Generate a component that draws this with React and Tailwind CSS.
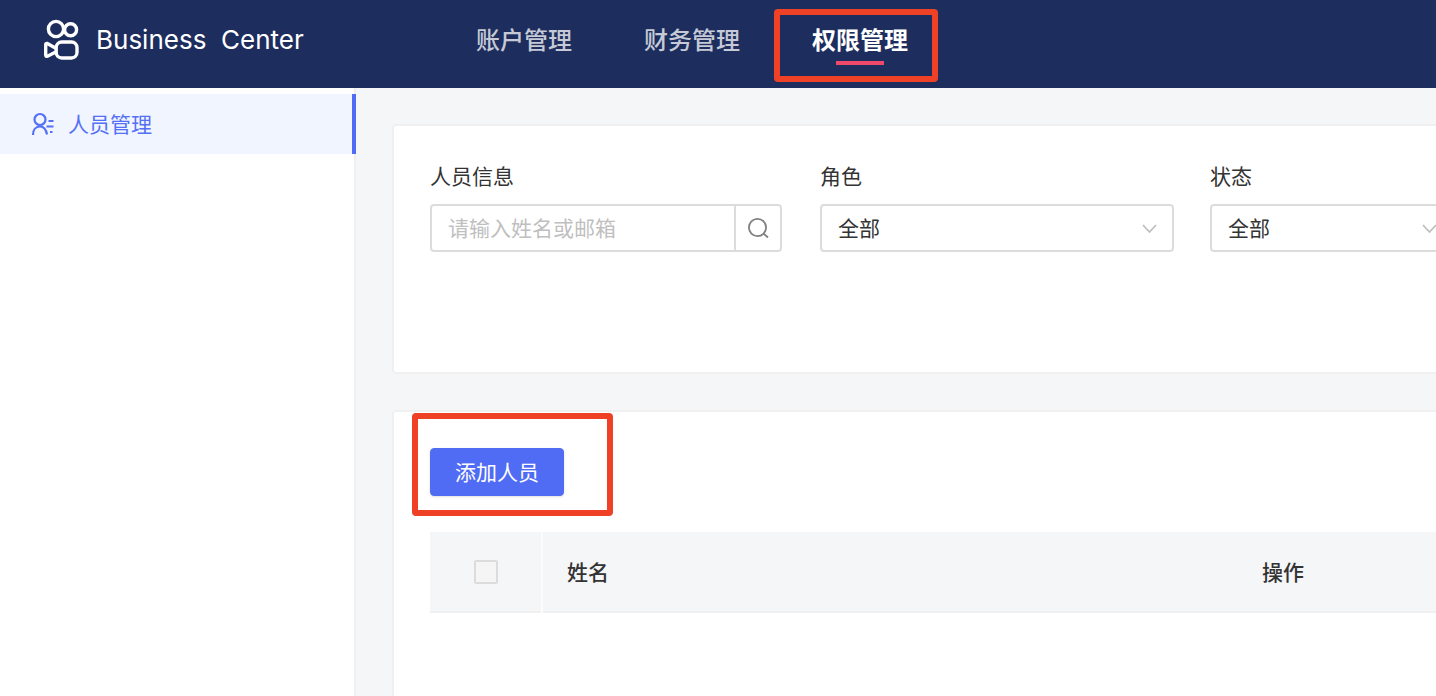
import React from "react";

const NAV = [
  { label: "账户管理", active: false },
  { label: "财务管理", active: false },
  { label: "权限管理", active: true },
];

function Logo() {
  return (
    <svg className="h-11 w-10" viewBox="0 0 40 44" fill="none" stroke="#fff" strokeWidth="3.4" strokeLinejoin="round" aria-hidden="true">
      <circle cx="14" cy="12" r="7.6" />
      <circle cx="28.6" cy="12.8" r="6" />
      <rect x="14.2" y="25" width="20.8" height="16" rx="5.5" />
      <path d="M14.2 31.5 L5.4 26.5 Q3.7 26 3.7 28 V37.8 Q3.7 39.8 5.4 39.2 L14.2 34.8" />
    </svg>
  );
}

function PeopleIcon() {
  return (
    <svg className="h-6 w-6" viewBox="0 0 24 24" fill="none" stroke="currentColor" strokeWidth="2.2" aria-hidden="true">
      <circle cx="10" cy="7.5" r="5.5" />
      <path d="M3 23 C3 18 5.5 14.5 10 14.5 C13.5 14.5 16 17 17 22.5" />
      <path d="M18.5 9 H23.5 M16.5 14.5 H23.5 M20 20 H22.5" />
    </svg>
  );
}

function SearchIcon() {
  return (
    <svg className="h-6 w-6" viewBox="0 0 24 24" fill="none" stroke="currentColor" strokeWidth="1.8" aria-hidden="true">
      <circle cx="11.5" cy="11.5" r="8.6" />
      <path d="M17.6 17.6 L22 21.5" />
    </svg>
  );
}

function Chevron() {
  return (
    <svg
      className="pointer-events-none absolute top-4 right-4 h-4 w-4 text-[#bfbfbf]"
      viewBox="0 0 16 16"
      fill="none"
      stroke="currentColor"
      strokeWidth="1.8"
      aria-hidden="true"
    >
      <path d="M1 5 L7.5 12 L14 5" />
    </svg>
  );
}

function Highlight({ className }) {
  return (
    <span
      aria-hidden="true"
      className={`pointer-events-none absolute rounded-sm border-6 border-[#ee4126] ${className}`}
    />
  );
}

function SelectField({ id, label }) {
  return (
    <div className="flex min-w-0 flex-col gap-4">
      <label htmlFor={id} className="leading-6.5">{label}</label>
      <div className="relative">
        <select
          id={id}
          defaultValue="all"
          className="h-12 w-full appearance-none rounded border-2 border-[#dcdcdc] bg-white pr-12 pl-4 outline-none focus:border-[#506cf5]"
        >
          <option value="all">全部</option>
        </select>
        <Chevron />
      </div>
    </div>
  );
}

export default function App() {
  return (
    <div className="flex min-h-screen flex-col overflow-hidden bg-[#f5f6f8] font-['Noto_Sans_CJK_SC',sans-serif] text-[21px] text-[#333]">
      <header className="flex h-22 items-center bg-[#1d2e5e] pb-2.5 text-white">
        <div className="flex w-[476px] shrink-0 items-center gap-3.5 pl-[42px]">
          <Logo />
          <span className="font-[Inter,sans-serif] text-[26px] whitespace-pre">Business  Center</span>
        </div>
        <nav className="flex gap-18 text-2xl">
          {NAV.map((item) => (
            <a
              key={item.label}
              href="#"
              className={
                item.active
                  ? "relative leading-9 font-bold whitespace-nowrap"
                  : "leading-9 font-medium whitespace-nowrap text-white/75"
              }
            >
              {item.label}
              {item.active && (
                <>
                  <span className="absolute inset-x-6 top-10 h-1 bg-[#ed4a6b]" />
                  <Highlight className="-top-3 -left-[38px] h-[73px] w-41" />
                </>
              )}
            </a>
          ))}
        </nav>
      </header>

      <div className="flex flex-1">
        <aside className="w-[356px] shrink-0 border-r-2 border-[#f0f0f0] bg-white pt-1.5">
          <a
            href="#"
            className="-mr-0.5 flex h-15 items-center gap-3.5 border-r-4 border-[#506cf5] bg-[#f0f5ff] pl-[30px] text-[#5570f5]"
          >
            <PeopleIcon />
            <span>人员管理</span>
          </a>
        </aside>

        <main className="-mr-14 flex min-w-0 flex-1 flex-col gap-9 pt-9 pl-9">
          <form className="grid h-[250px] grid-cols-[354px_354px_1fr] content-start gap-9 rounded border-2 border-[#f0f0f0] bg-white p-9">
            <div className="flex flex-col gap-4">
              <label htmlFor="person" className="leading-6.5">人员信息</label>
              <div className="mr-0.5 flex h-12 rounded border-2 border-[#dcdcdc]">
                <input
                  id="person"
                  type="text"
                  placeholder="请输入姓名或邮箱"
                  className="min-w-0 flex-1 bg-transparent px-4 outline-none placeholder:text-[#bfbfbf]"
                />
                <button
                  type="button"
                  aria-label="搜索"
                  className="flex w-[46px] items-center justify-center border-l-2 border-[#dcdcdc] text-[#808080]"
                >
                  <SearchIcon />
                </button>
              </div>
            </div>
            <SelectField id="role" label="角色" />
            <SelectField id="status" label="状态" />
          </form>

          <section className="flex-1 rounded-t border-2 border-b-0 border-[#f0f0f0] bg-white p-9">
            <div className="relative flex w-fit">
              <button type="button" className="h-12 rounded border border-[#506cf5] bg-[#506cf5] px-6 text-white shadow-sm">
                添加人员
              </button>
              <Highlight className="-top-[35px] -left-[18px] h-[103px] w-[201px]" />
            </div>
            <table className="mt-9 w-full table-fixed border-collapse text-left">
              <thead>
                <tr className="h-20 border-b-2 border-[#f0f0f0] bg-[#f5f6f8]">
                  <th className="w-28 border-r-2 border-r-[#fcfcfc] text-center">
                    <input
                      type="checkbox"
                      aria-label="全选"
                      className="mx-auto block h-6 w-6 appearance-none rounded-xs border-2 border-[#dcdcdc] bg-[#f5f5f5]"
                    />
                  </th>
                  <th className="w-[696px] px-6 font-medium">姓名</th>
                  <th className="px-6 font-medium">操作</th>
                </tr>
              </thead>
            </table>
          </section>
        </main>
      </div>
    </div>
  );
}
